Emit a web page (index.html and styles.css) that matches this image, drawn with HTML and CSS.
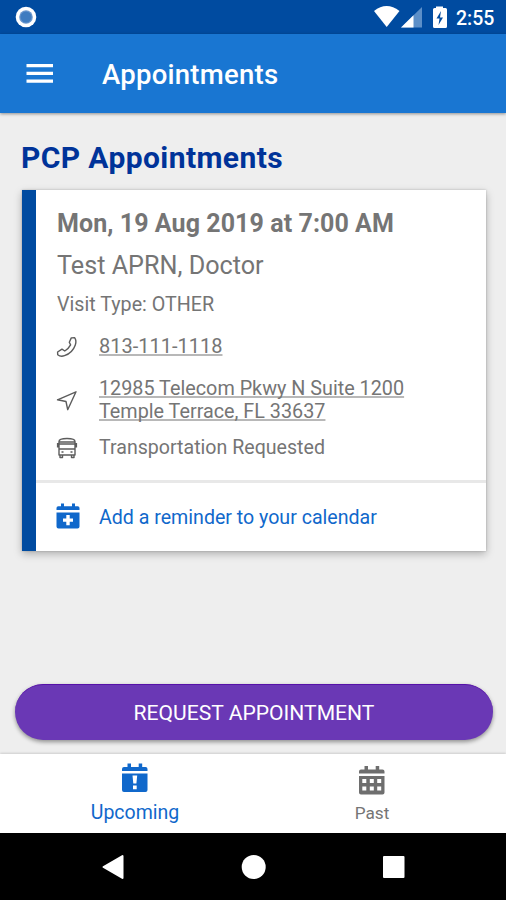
FILE: index.html
```html
<!DOCTYPE html>
<html lang="en">
<head>
<meta charset="utf-8">
<title>Appointments</title>
<link rel="stylesheet" href="styles.css">
</head>
<body>
<div class="status">
  <svg class="recorder" width="22" height="22" viewBox="0 0 22 22"><circle cx="11" cy="11" r="10.3" fill="#fff"/><circle cx="11" cy="11" r="6.800" fill="#6a97ce"/><circle cx="11" cy="11" r="5.500" fill="#3f7cc0"/></svg>
  <svg class="signals" width="76" height="24" viewBox="0 0 76 24">
    <path d="M1 7Q13.500-3 26.500 7L13.700 23Z" fill="#fff"/>
    <path d="M28 23.500L49 3V23.500Z" fill="#5c8fc8"/><path d="M28 23.500L40.500 11.300V23.500Z" fill="#fff"/>
    <path d="M63 4V2.500H70V4H72.500Q74 4 74 5.500V22.500Q74 24 72.500 24H61.500Q60 24 60 22.500V5.500Q60 4 61.500 4Z" fill="#fff"/><path d="M68 7L63.500 14.500H66.500L65.500 21L70 13.500H67Z" fill="#004ba0"/>
  </svg>
  <span class="clock">2:55</span>
</div>
<header class="appbar">
  <svg width="28" height="22" viewBox="0 0 28 22" fill="#fff"><path d="M.5 1H27V4.300H.5zM.5 8.700H27V12H.5zM.5 16.500H27V19.800H.5z"/></svg>
  <h1>Appointments</h1>
</header>
<main>
  <h2>PCP Appointments</h2>
  <article class="card">
    <section class="details">
      <h3>Mon, 19 Aug 2019 at 7:00 AM</h3>
      <p class="doctor">Test APRN, Doctor</p>
      <p class="visit">Visit Type: OTHER</p>
      <div class="row phone">
        <svg width="22" height="22" viewBox="0 0 22 22" class="line"><path d="M15.300 1.900L18.600 1.600Q20.800 4.500 19.300 9Q16.500 17 8.500 19.700Q4.500 21 1.700 18.800L1.600 16L6 13.200L8.800 15Q12.700 12.500 14.600 8.900L13.300 6.300Z"/></svg>
        <a><span>813-111-1118</span></a>
      </div>
      <div class="row address">
        <svg width="22" height="22" viewBox="0 0 22 22" class="line"><path d="M1.500 9.800L20 1.800L11.700 19.700L10 11.500Z"/></svg>
        <a><span>12985 Telecom Pkwy N Suite 1200</span><br><span>Temple Terrace, FL 33637</span></a>
      </div>
      <div class="row transport">
        <svg width="22" height="22" viewBox="0 0 22 22" class="line"><path d="M3 18V4.500Q3 1.500 11 1.500T19 4.500V18ZM3.500 5H18.500M3 7H19M3 12H19M1.600 6V10.500M20.400 6V10.500M4 18V20.500H6.500V18M15.500 18V20.500H18V18M5.500 15H7.500M14.500 15H16.500"/></svg>
        <span>Transportation Requested</span>
      </div>
    </section>
    <div class="row reminder">
      <svg width="24" height="27" viewBox="0 0 24 27" fill="#1068cb"><path d="M.5 7V5Q.5 3.200 2.300 3.200H5V.5H8V3.200H16V.5H19V3.200H21.700Q23.500 3.200 23.500 5V7ZM.5 9.500H23.500V23.500Q23.500 25.500 21.500 25.500H2.500Q.5 25.500 .5 23.500Z"/><path d="M10.300 12H13.700V15.500H17V18.800H13.700V22.200H10.300V18.800H7V15.500H10.300Z" fill="#fff"/></svg>
      <span>Add a reminder to your calendar</span>
    </div>
  </article>
  <button>REQUEST APPOINTMENT</button>
</main>
<nav class="tabs">
  <div class="tab upcoming">
    <svg width="28" height="31" viewBox="0 0 28 31" fill="#1068cb"><path d="M1 8V6Q1 4 3 4H6.500V.5H10V4H17.700V.5H21.200V4H24.500Q26.500 4 26.500 6V8ZM1 10.500H26.500V27Q26.500 29 24.500 29H3Q1 29 1 27Z"/><path d="M11.500 12.500H16.200L15.400 20.500H12.300ZM12 22.500H15.700V26.200H12Z" fill="#fff"/></svg>
    <span>Upcoming</span>
  </div>
  <div class="tab past">
    <svg width="28" height="31" viewBox="0 0 28 31" fill="#6e6e6e"><path d="M1 8.500V6.500Q1 4.500 3 4.500H6.500V1H10V4.500H17.700V1H21.200V4.500H24.500Q26.500 4.500 26.500 6.500V8.500ZM1 11H26.500V27.500Q26.500 29.500 24.500 29.500H3Q1 29.500 1 27.500Z"/><path d="M4.300 14H8.300V18H4.300zM11.800 14H15.800V18H11.800zM19.200 14H23.200V18H19.200zM4.300 21.500H8.300V25.500H4.300zM11.800 21.500H15.800V25.500H11.800zM19.200 21.500H23.200V25.500H19.200z" fill="#fff"/></svg>
    <span>Past</span>
  </div>
</nav>
<footer class="system">
  <svg width="24" height="26" viewBox="0 0 24 26"><path d="M2.500 13L21.500 2V24Z" fill="#fff" stroke="#fff" stroke-width="2" stroke-linejoin="round"/></svg>
  <svg width="26" height="26" viewBox="0 0 26 26"><circle cx="12.700" cy="13" r="12" fill="#fff"/></svg>
  <svg width="22" height="22" viewBox="0 0 22 22"><rect width="21.500" height="22" rx="1" fill="#fff"/></svg>
</footer>
</body>
</html>
```
FILE: styles.css
```css
* { box-sizing: border-box; margin: 0; padding: 0; }
body { width: 506px; height: 900px; overflow: hidden; display: flex; flex-direction: column; background: #eee; font-family: Roboto, sans-serif; color: #757575; white-space: nowrap; }
svg { display: block; flex: none; }
.status { height: 34px; background: #004ba0; color: #fff; display: flex; align-items: flex-start; }
.recorder { margin: 6px 0 0 15px; }
.signals { margin: 4px 0 0 336px; }
.clock { font-size: 19.500px; font-weight: 500; line-height: 24px; margin: 7px 0 0 7px; }
.appbar { height: 79px; background: #1976d2; color: #fff; display: flex; align-items: center; padding: 0 26px; box-shadow: 0 1px 3px #0006; z-index: 1; }
h1 { font-size: 27.500px; font-weight: 500; line-height: 32px; letter-spacing: .25px; margin: 3px 0 0 48px; }
main { flex: 1; display: flex; flex-direction: column; }
h2 { font-size: 30px; font-weight: 700; line-height: 34px; letter-spacing: .4px; color: #003399; margin: 28px 0 0 21px; }
.card { width: 464px; height: 361px; margin: 15px 0 0 22px; background: #fff; border-left: 14px solid #004ba0; box-shadow: 0 3px 8px #0004, 0 0 2px #0003; }
.details { height: 293px; padding: 18px 0 0 21px; border-bottom: 3px solid #e8e8e8; }
h3 { font-size: 25px; font-weight: 700; line-height: 32px; letter-spacing: .07px; }
.doctor { font-size: 25.200px; line-height: 32px; margin-top: 10px; }
.visit { font-size: 19.700px; line-height: 24px; margin-top: 11px; }
.row { display: flex; align-items: center; font-size: 19.800px; line-height: 23px; }
.row svg { margin: 0 21px 0 -1px; }
.line { fill: none; stroke: #5c5c5c; stroke-width: 1.400; stroke-linejoin: round; }
.phone { margin-top: 18px; font-size: 20px; }
.address { margin-top: 19px; }
.address svg { position: relative; top: 1px; }
.transport { margin-top: 13px; font-size: 19.600px; }
.row a span { text-decoration: underline; text-decoration-color: #b8b8b8; text-decoration-thickness: 2px; text-underline-offset: 1px; text-decoration-skip-ink: none; }
.row.reminder { height: 68px; padding-left: 21px; color: #1068cb; font-size: 19.600px; }
.row.reminder svg { margin: -2px 19px 0 -1px; }
button { width: 478px; height: 56px; margin: 133px 0 0 15px; padding-top: 1px; border: 0; border-top: 1px solid #5611a8; border-radius: 28px; background: #6a38b5; color: #fff; font: 400 21.100px/26px Roboto, sans-serif; box-shadow: 0 2px 4px #0006; }
.tabs { height: 79px; background: #fff; display: flex; box-shadow: 0 -1px 2px #0002; }
.tab { display: flex; flex-direction: column; align-items: center; font-size: 19.500px; line-height: 24px; }
.upcoming { width: 270px; padding-top: 9px; color: #1068cb; }
.upcoming span { margin-top: 7px; }
.past { width: 204px; padding-top: 11px; font-size: 17.200px; }
.past span { margin-top: 5px; }
.system { height: 67px; background: #000; display: flex; align-items: center; justify-content: space-between; padding: 0 101px; }
```
